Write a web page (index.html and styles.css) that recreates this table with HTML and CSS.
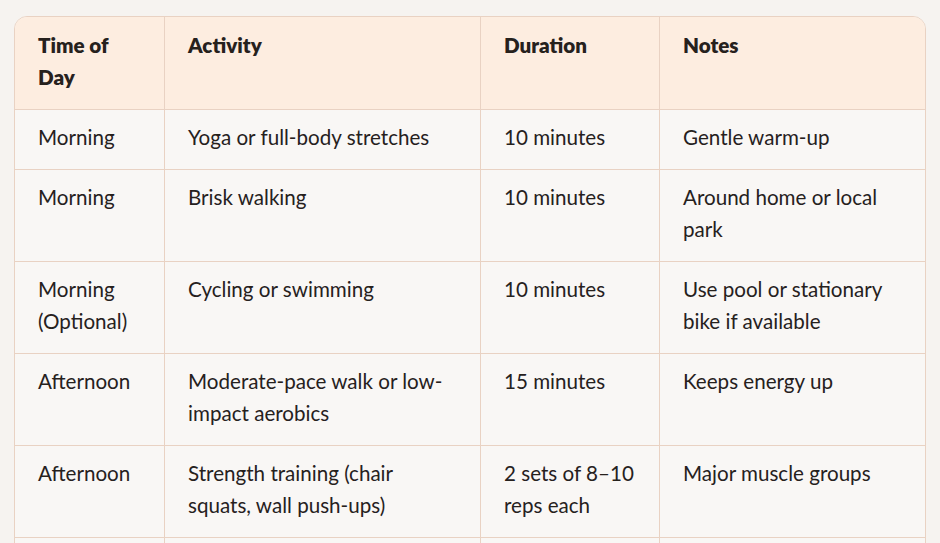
FILE: index.html
```html
<!DOCTYPE html>
<html lang="en">
<head>
<meta charset="utf-8">
<title>Activity schedule</title>
<link rel="stylesheet" href="styles.css">
</head>
<body>
<div class="wrap">
<table class="plan">
<colgroup>
<col class="c1"><col class="c2"><col class="c3"><col class="c4">
</colgroup>
<thead>
<tr><th>Time of Day</th><th>Activity</th><th>Duration</th><th>Notes</th></tr>
</thead>
<tbody>
<tr><td>Morning</td><td>Yoga or full-body stretches</td><td>10 minutes</td><td>Gentle warm-up</td></tr>
<tr><td>Morning</td><td>Brisk walking</td><td>10 minutes</td><td>Around home or local park</td></tr>
<tr><td>Morning (Optional)</td><td>Cycling or swimming</td><td>10 minutes</td><td>Use pool or stationary bike if available</td></tr>
<tr><td>Afternoon</td><td>Moderate-pace walk or low-impact aerobics</td><td>15 minutes</td><td>Keeps energy up</td></tr>
<tr><td>Afternoon</td><td>Strength training (chair squats, wall push-ups)</td><td>2 sets of 8–10 reps each</td><td>Major muscle groups</td></tr>
<tr class="more"><td></td><td></td><td></td><td></td></tr>
</tbody>
</table>
</div>
</body>
</html>
```
FILE: styles.css
```css
html, body {
  margin: 0;
  padding: 0;
  background: #f6f3f0;
}
body {
  font-family: Lato, "Noto Sans", sans-serif;
  color: #26211d;
  overflow: hidden;
  height: 543px;
}
.wrap {
  padding: 16px 0 0 14px;
}
.plan {
  width: 912px;
  border-collapse: separate;
  border-spacing: 0;
  table-layout: fixed;
  font-size: 20.6px;
  line-height: 32px;
  border: 1px solid #e9d2c3;
  border-radius: 13px;
  overflow: hidden;
  background: #f9f7f5;
}
.c1 { width: 150px; }
.c2 { width: 316px; }
.c3 { width: 179px; }
.c4 { width: auto; }
.plan th, .plan td {
  text-align: left;
  vertical-align: top;
  padding: 11px 23px 16px 23px;
  border-right: 1px solid #e9d2c3;
  border-bottom: 1px solid #e9d2c3;
}
.plan th:last-child, .plan td:last-child {
  border-right: none;
}
.plan th {
  background: #fdede0;
  font-weight: 800;
  padding-top: 12px;
  padding-bottom: 16px;
}
.plan td {
  font-weight: 400;
}
.plan .more td {
  height: 32px;
}
```
